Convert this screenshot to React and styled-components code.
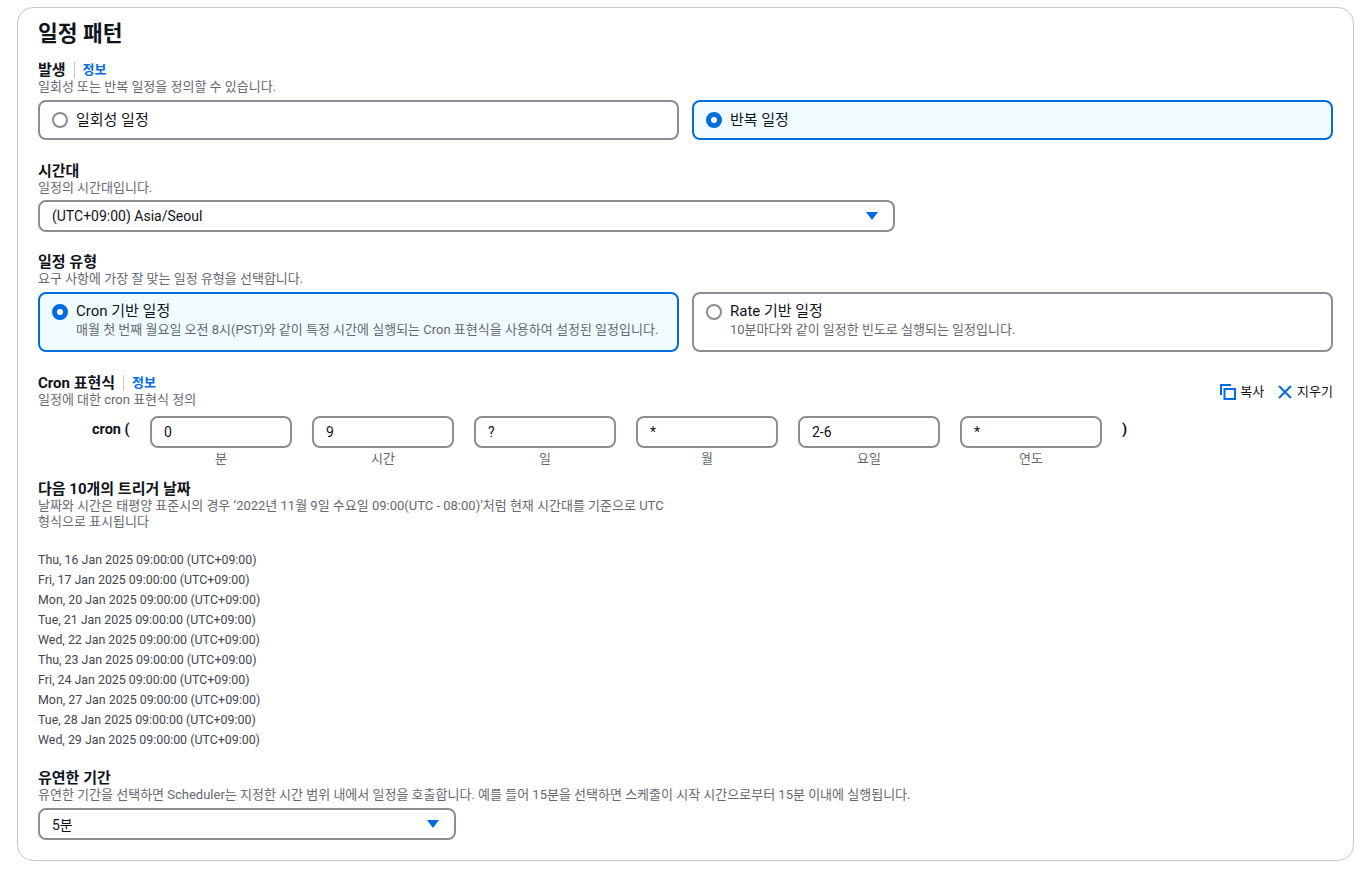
import React from 'react';
import styled, { createGlobalStyle } from 'styled-components';

const GlobalStyle = createGlobalStyle`
  body {
    margin: 0;
    background: #ffffff;
    color: #0f141a;
    font-family: Roboto, 'Noto Sans CJK KR', sans-serif;
  }
`;

const Page = styled.div`
  width: 1370px;
  height: 870px;
  box-sizing: border-box;
  padding: 7px 16px 9px 17px;
  overflow: hidden;
`;

const Card = styled.section`
  box-sizing: border-box;
  height: 854px;
  border: 1px solid #c6c6cd;
  border-radius: 16px;
  padding: 12px 20px 0;
`;

const Title = styled.h2`
  margin: 0 0 11px;
  font-size: 21.5px;
  line-height: 28px;
  font-weight: 700;
`;

const Field = styled.div`
  margin-bottom: ${(p) => p.$mb || 0}px;
`;

const LabelRow = styled.div`
  box-sizing: border-box;
  display: flex;
  align-items: center;
  height: 20px;
  padding-top: 2px;
`;

const Label = styled.span`
  font-size: 15px;
  line-height: 18px;
  font-weight: 700;
`;

const InfoLink = styled.a`
  margin-left: 8px;
  padding-left: 8px;
  border-left: 1px solid #c6c6cd;
  color: #006ce0;
  font-size: 13px;
  font-weight: 700;
  line-height: 16px;
`;

const Desc = styled.div`
  color: #656871;
  font-size: 13px;
  line-height: 16px;
  max-width: ${(p) => p.$max || 'none'};
`;

const Tiles = styled.div`
  display: grid;
  grid-template-columns: 641px 641px;
  gap: 13px;
  margin-top: 5px;
`;

const Tile = styled.div`
  box-sizing: border-box;
  height: ${(p) => p.$h}px;
  display: flex;
  gap: 8px;
  padding: ${(p) => (p.$h > 50 ? '7px 12px' : '0 12px')};
  align-items: ${(p) => (p.$h > 50 ? 'flex-start' : 'center')};
  border: 2px solid ${(p) => (p.$on ? '#006ce0' : '#8c8c94')};
  border-radius: 8px;
  background: ${(p) => (p.$on ? '#f0fbff' : '#ffffff')};
`;

const Radio = styled.span`
  box-sizing: border-box;
  flex: none;
  width: 16px;
  height: 16px;
  margin-top: ${(p) => (p.$top ? '3px' : '0')};
  border-radius: 50%;
  border: ${(p) => (p.$on ? '5px solid #006ce0' : '2px solid #8c8c94')};
  background: #ffffff;
`;

const TileText = styled.div`
  font-size: 15px;
  line-height: 20px;
  color: #0f141a;
`;

const TileHint = styled.div`
  color: #656871;
  font-size: 13px;
  line-height: 16px;
  margin-top: 1px;
`;

const Select = styled.div`
  box-sizing: border-box;
  width: ${(p) => p.$w}px;
  height: 32px;
  margin-top: ${(p) => p.$mt}px;
  display: flex;
  align-items: center;
  justify-content: space-between;
  padding: 0 15px 0 12px;
  border: 2px solid #8c8c94;
  border-radius: 8px;
  font-size: 14px;
`;

const Caret = styled.span`
  width: 0;
  height: 0;
  border-left: 6px solid transparent;
  border-right: 6px solid transparent;
  border-top: 8px solid #006ce0;
`;

const CronHead = styled.div`
  display: flex;
  justify-content: space-between;
  align-items: flex-start;
`;

const Actions = styled.div`
  display: flex;
  gap: 13px;
  align-items: center;
  margin-top: 11px;
`;

const Action = styled.span`
  display: flex;
  align-items: center;
  gap: 4px;
  font-size: 13px;
  line-height: 18px;
  color: #0f141a;
`;

const CronRow = styled.div`
  display: flex;
  align-items: flex-start;
  margin-top: 8px;
  margin-bottom: 11px;
`;

const CronWord = styled.div`
  width: 112px;
  padding-left: 54px;
  box-sizing: border-box;
  font-size: 14.5px;
  font-weight: 700;
  line-height: 28px;
`;

const CronCols = styled.div`
  display: grid;
  grid-template-columns: repeat(6, 142px);
  column-gap: 20px;
`;

const CronCol = styled.div`
  display: flex;
  flex-direction: column;
  align-items: center;
`;

const CronInput = styled.div`
  box-sizing: border-box;
  width: 100%;
  height: 32px;
  display: flex;
  align-items: center;
  padding: 0 12px;
  border: 2px solid #8c8c94;
  border-radius: 8px;
  font-size: 14px;
`;

const CronUnit = styled.div`
  color: #656871;
  font-size: 13px;
  line-height: 16px;
  margin-top: 3px;
`;

const CronClose = styled.div`
  margin-left: 20px;
  font-size: 14.5px;
  font-weight: 700;
  line-height: 28px;
`;

const Dates = styled.div`
  margin-top: 20px;
`;

const DateRow = styled.div`
  font-size: 12.4px;
  line-height: 20px;
  color: #414750;
`;

const occurrences = [
  'Thu, 16 Jan', 'Fri, 17 Jan', 'Mon, 20 Jan', 'Tue, 21 Jan', 'Wed, 22 Jan',
  'Thu, 23 Jan', 'Fri, 24 Jan', 'Mon, 27 Jan', 'Tue, 28 Jan', 'Wed, 29 Jan',
];

const cronFields = [
  ['0', '분'], ['9', '시간'], ['?', '일'], ['*', '월'], ['2-6', '요일'], ['*', '연도'],
];

export default function App() {
  return (
    <Page>
      <GlobalStyle />
      <Card>
        <Title>일정 패턴</Title>

        <Field $mb={20}>
          <LabelRow>
            <Label>발생</Label>
            <InfoLink>정보</InfoLink>
          </LabelRow>
          <Desc>일회성 또는 반복 일정을 정의할 수 있습니다.</Desc>
          <Tiles>
            <Tile $h={40}>
              <Radio />
              <TileText>일회성 일정</TileText>
            </Tile>
            <Tile $h={40} $on>
              <Radio $on />
              <TileText>반복 일정</TileText>
            </Tile>
          </Tiles>
        </Field>

        <Field $mb={19}>
          <LabelRow>
            <Label>시간대</Label>
          </LabelRow>
          <Desc>일정의 시간대입니다.</Desc>
          <Select $w={857} $mt={4}>
            (UTC+09:00) Asia/Seoul
            <Caret />
          </Select>
        </Field>

        <Field $mb={20}>
          <LabelRow>
            <Label>일정 유형</Label>
          </LabelRow>
          <Desc>요구 사항에 가장 잘 맞는 일정 유형을 선택합니다.</Desc>
          <Tiles>
            <Tile $h={60} $on>
              <Radio $on $top />
              <div>
                <TileText>Cron 기반 일정</TileText>
                <TileHint>매월 첫 번째 월요일 오전 8시(PST)와 같이 특정 시간에 실행되는 Cron 표현식을 사용하여 설정된 일정입니다.</TileHint>
              </div>
            </Tile>
            <Tile $h={60}>
              <Radio $top />
              <div>
                <TileText>Rate 기반 일정</TileText>
                <TileHint>10분마다와 같이 일정한 빈도로 실행되는 일정입니다.</TileHint>
              </div>
            </Tile>
          </Tiles>
        </Field>

        <CronHead>
          <div>
            <LabelRow>
              <Label>Cron 표현식</Label>
              <InfoLink>정보</InfoLink>
            </LabelRow>
            <Desc>일정에 대한 cron 표현식 정의</Desc>
          </div>
          <Actions>
            <Action>
              <svg width="16" height="16" viewBox="0 0 16 16" fill="none" stroke="#006ce0" strokeWidth="2">
                <path d="M1 11V1h10" />
                <rect x="4.5" y="5" width="10.5" height="10" />
              </svg>
              복사
            </Action>
            <Action>
              <svg width="16" height="16" viewBox="0 0 16 16" fill="none" stroke="#006ce0" strokeWidth="2">
                <path d="M2 2l12 12M14 2L2 14" />
              </svg>
              지우기
            </Action>
          </Actions>
        </CronHead>

        <CronRow>
          <CronWord>cron (</CronWord>
          <CronCols>
            {cronFields.map(([value, unit]) => (
              <CronCol key={unit}>
                <CronInput>{value}</CronInput>
                <CronUnit>{unit}</CronUnit>
              </CronCol>
            ))}
          </CronCols>
          <CronClose>)</CronClose>
        </CronRow>

        <Field $mb={17}>
          <LabelRow>
            <Label>다음 10개의 트리거 날짜</Label>
          </LabelRow>
          <Desc $max="630px">
            날짜와 시간은 태평양 표준시의 경우 ‘2022년 11월 9일 수요일 09:00(UTC - 08:00)’처럼 현재 시간대를 기준으로 UTC 형식으로 표시됩니다
          </Desc>
          <Dates>
            {occurrences.map((day) => (
              <DateRow key={day}>{day} 2025 09:00:00 (UTC+09:00)</DateRow>
            ))}
          </Dates>
        </Field>

        <Field>
          <LabelRow>
            <Label>유연한 기간</Label>
          </LabelRow>
          <Desc>유연한 기간을 선택하면 Scheduler는 지정한 시간 범위 내에서 일정을 호출합니다. 예를 들어 15분을 선택하면 스케줄이 시작 시간으로부터 15분 이내에 실행됩니다.</Desc>
          <Select $w={418} $mt={5}>
            5분
            <Caret />
          </Select>
        </Field>
      </Card>
    </Page>
  );
}
